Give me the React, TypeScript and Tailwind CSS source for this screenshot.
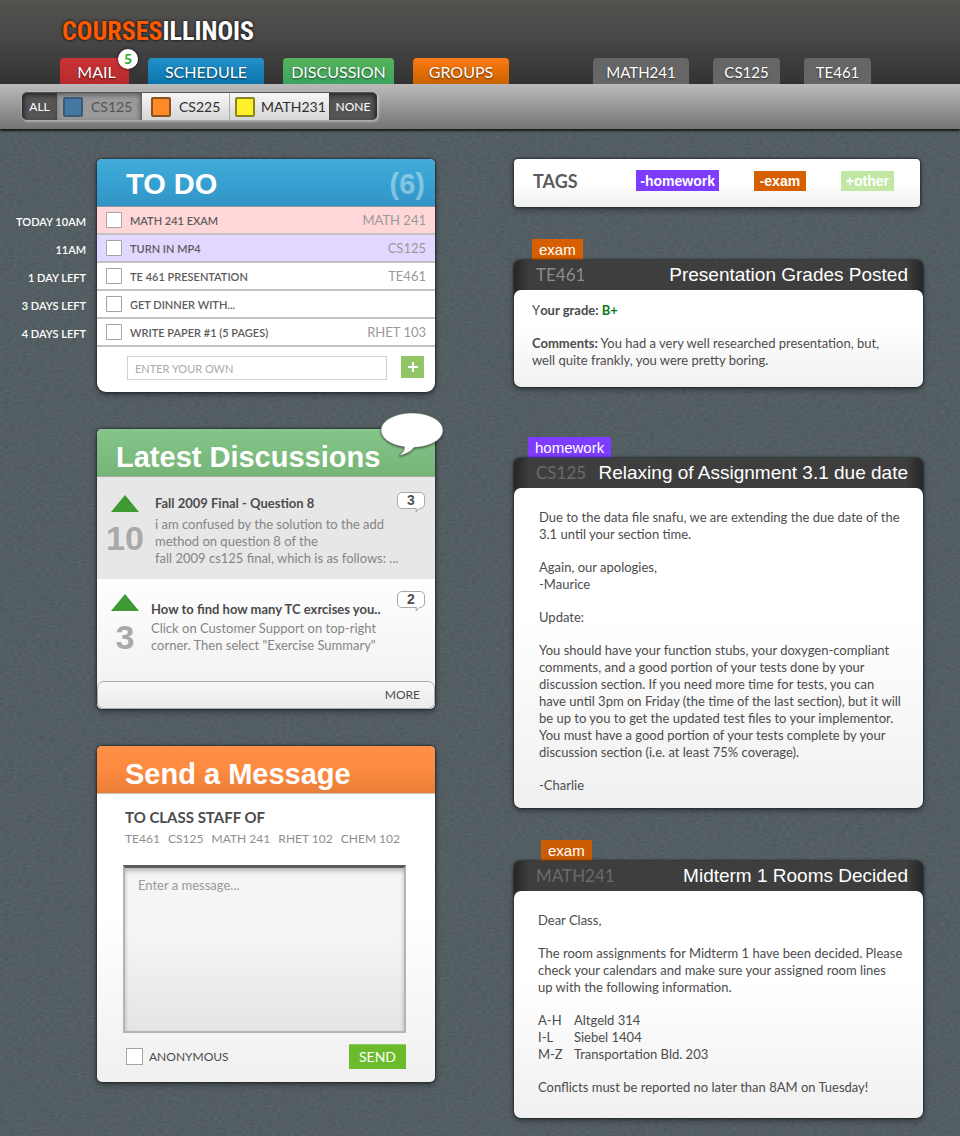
import type { ReactNode } from "react";

const sans = "font-['Lato','Carlito',sans-serif]";
const helv = "font-['Liberation_Sans',Arial,sans-serif]";

const sectionTabs = [
  { label: "MAIL", style: "w-[69px] pl-1 text-base bg-linear-to-b from-[#c93335] to-[#b82b2f]", badge: 5 },
  { label: "SCHEDULE", style: "w-[116px] text-base bg-linear-to-b from-[#2191cb] to-[#0b74ab]" },
  { label: "DISCUSSION", style: "w-[111px] text-base bg-linear-to-b from-[#57b35a] to-[#3aa45e]" },
  { label: "GROUPS", style: "w-[96px] text-base bg-linear-to-b from-[#ff7a12] to-[#c96300]" },
];

const courseTabs = [
  { label: "MATH241", style: "w-[96px] text-[15px] bg-[#666]" },
  { label: "CS125", style: "w-[67px] text-[15px] bg-[#666]" },
  { label: "TE461", style: "w-[67px] text-[15px] bg-[#666]" },
];

const todos = [
  { time: "TODAY 10AM", text: "MATH 241 EXAM", course: "MATH 241", style: "bg-[#ffd7d8]" },
  { time: "11AM", text: "TURN IN MP4", course: "CS125", style: "bg-[#e2d8ff]" },
  { time: "1 DAY LEFT", text: "TE 461 PRESENTATION", course: "TE461", style: "bg-white" },
  { time: "3 DAYS LEFT", text: "GET DINNER WITH...", course: "", style: "bg-white" },
  { time: "4 DAYS LEFT", text: "WRITE PAPER #1 (5 PAGES)", course: "RHET 103", style: "bg-white" },
];

const cardShadow = "shadow-[0_0_2px_1px_rgba(20,25,28,0.6),0_3px_6px_rgba(0,0,0,0.35)]";

function Texture() {
  return (
    <svg aria-hidden="true" className="pointer-events-none absolute inset-0 h-full w-full opacity-[0.06]">
      <filter id="grain" x="0" y="0" width="100%" height="100%" colorInterpolationFilters="sRGB">
        <feTurbulence type="fractalNoise" baseFrequency="0.22 0.5" numOctaves="2" seed="4" />
        <feColorMatrix values="0.8 0.8 0 0 -0.43  0.8 0.8 0 0 -0.41  0.8 0.8 0 0 -0.4  0 0 0 0 1" />
      </filter>
      <rect width="100%" height="100%" filter="url(#grain)" />
    </svg>
  );
}

function Tab({ label, style, badge }: { label: string; style: string; badge?: number }) {
  return (
    <a
      href="#"
      className={`relative flex h-[26px] items-center justify-center rounded-t-[4px] pt-[2px] leading-5 text-white [text-shadow:0_1px_2px_rgba(0,0,0,0.6)] ${style}`}
    >
      {label}
      {badge !== undefined && (
        <span className="absolute -top-[9px] -right-[9px] flex size-5 items-center justify-center rounded-full bg-white text-sm font-bold text-[#1fa81f] shadow-[0_0_3px_1px_rgba(0,0,0,0.35)] [text-shadow:none]">
          {badge}
        </span>
      )}
    </a>
  );
}

function CourseToggle({ label, swatch, style }: { label: string; swatch: string; style: string }) {
  return (
    <button type="button" className={`flex h-full items-center text-sm ${style}`}>
      <span className={`size-5 shrink-0 rounded-[2px] border-2 ${swatch}`} />
      {label}
    </button>
  );
}

function CardHeader({ title, style, children }: { title: string; style: string; children?: ReactNode }) {
  return (
    <header className={`relative flex h-12 items-center justify-between rounded-t-[5px] border-b pr-[10px] text-[29px] text-white ${helv} ${style}`}>
      <h2 className="font-bold">{title}</h2>
      {children}
    </header>
  );
}

function TodoCard() {
  return (
    <section className={`rounded-t-[5px] rounded-b-[9px] bg-white ${cardShadow}`}>
      <CardHeader title="TO DO" style="border-[#8a96a0] bg-linear-to-b from-[#43abd8] via-[#37a1d2] to-[#3195c4] pt-1 pl-[29px]">
        <span className="font-bold text-white/40">(6)</span>
      </CardHeader>
      <ul>
        {todos.map((t, i) => (
          <li key={t.text} className="-ml-[97px] flex h-7 items-center">
            <span className="w-[97px] shrink-0 pt-[2px] pr-[11px] text-right text-[11px] font-semibold text-white">{t.time}</span>
            <div className={`flex h-full flex-1 items-center border-b-2 border-[#c2c2c2] px-[9px] ${t.style}`}>
              <input
                id={`todo-${i}`}
                type="checkbox"
                className="size-4 shrink-0 appearance-none rounded-[1px] border border-black/35 bg-white checked:bg-[#90c665]"
              />
              <label htmlFor={`todo-${i}`} className="flex flex-1 items-center justify-between pt-[2px] pl-2 text-[11px] font-semibold text-[#5c5c5c]">
                {t.text}
                <span className="text-[13px] font-normal text-[#999]">{t.course}</span>
              </label>
            </div>
          </li>
        ))}
      </ul>
      <form className="flex justify-between pt-[9px] pr-[11px] pb-3 pl-[30px]" onSubmit={(e) => e.preventDefault()}>
        <input
          type="text"
          aria-label="Enter your own"
          placeholder="ENTER YOUR OWN"
          className="mr-[14px] h-6 min-w-0 flex-1 border border-[#d2d2d2] px-[7px] text-[11px] text-[#555] outline-none placeholder:text-[#aaa]"
        />
        <button type="button" aria-label="Add" className="flex h-[22px] w-[23px] items-center justify-center bg-[#90c665]">
          <svg viewBox="0 0 10 10" className="size-[10px] fill-white">
            <path d="M4 0h2v4h4v2H6v4H4V6H0V4h4z" />
          </svg>
        </button>
      </form>
    </section>
  );
}

function Discussion({ votes, replies, style, children }: { votes: number; replies: number; style: string; children: ReactNode }) {
  return (
    <article className={`flex h-[102px] items-start pr-[10px] ${style}`}>
      <div className="flex w-[54px] shrink-0 flex-col items-center pt-[15px] pl-[2px]">
        <button type="button" aria-label="Vote up">
          <svg viewBox="0 0 28 17" className="h-[17px] w-7">
            <path d="M14 0 28 17H0z" fill="#3f9a33" />
          </svg>
        </button>
        <span className={`pt-2 text-[34px] leading-9 font-bold text-[#a9a9a9] ${helv}`}>{votes}</span>
      </div>
      {children}
      <a
        href="#"
        aria-label={`${replies} replies`}
        className={`relative mt-3 flex h-[18px] w-7 shrink-0 justify-center text-sm leading-[17px] font-bold text-[#505050] ${helv}`}
      >
        <svg viewBox="0 0 28 21" className="absolute top-0 left-0 h-[21px] w-7" fill="#fff" stroke="#a8a8a8">
          <path d="M5 .5h18a4.500 4.500 0 0 1 4.500 4.500v7a4.500 4.500 0 0 1-4.500 4.500h-.5l-3.500 3.500.5-3.500H5A4.500 4.500 0 0 1 .5 12V5A4.500 4.500 0 0 1 5 .5z" />
        </svg>
        <span className="relative">{replies}</span>
      </a>
    </article>
  );
}

function DiscussionsCard() {
  return (
    <section className={`rounded-[5px] bg-linear-to-b from-white from-50% to-[#f0f0f0] ${cardShadow}`}>
      <CardHeader title="Latest Discussions" style="border-[#a0aba0] bg-linear-to-b from-[#86c68a] to-[#76b478] pt-[10px] pl-[19px]">
        <svg viewBox="0 0 64 48" className="absolute -top-[17px] -right-[9px] h-12 w-16 drop-shadow-[0_1px_1px_rgba(0,0,0,0.5)]">
          <path
            d="M32 1C14.900 1 1 8.600 1 18.300c0 8.200 10 15 23.500 16.700 0 3.500-2.500 6.500-5.500 8.500 6.500-.8 12-4 15-8.100C50.500 35 63 27.500 63 18.300 63 8.600 49.100 1 32 1z"
            fill="#fff"
            stroke="#5a6a60"
            strokeWidth=".6"
          />
        </svg>
      </CardHeader>
      <Discussion votes={10} replies={3} style="bg-[#e7e7e7] pt-[3px]">
        <div className="min-w-0 flex-1 pt-[15px] pl-1 text-[13px] leading-[17px] text-[#858585]">
          <h3 className="pb-1 font-bold text-[#4c4c4c]">Fall 2009 Final - Question 8</h3>
          <p className="whitespace-nowrap">
            i am confused by the solution to the add
            <br />
            method on question 8 of the
            <br />
            fall 2009 cs125 final, which is as follows: ...
          </p>
        </div>
      </Discussion>
      <Discussion votes={3} replies={2} style="">
        <div className="min-w-0 flex-1 pt-[22px] text-[13px] leading-[17px] text-[#858585]">
          <h3 className="pb-[2px] font-bold whitespace-nowrap text-[#4c4c4c]">How to find how many TC exrcises you..</h3>
          <p className="whitespace-nowrap">
            Click on Customer Support on top-right
            <br />
            corner. Then select "Exercise Summary"
          </p>
        </div>
      </Discussion>
      <a
        href="#"
        className="flex h-7 items-center justify-end rounded-[7px] border border-[#aaa] bg-linear-to-b from-[#f8f8f8] to-[#ebebeb] pr-[14px] text-xs text-[#4c4c4c]"
      >
        MORE
      </a>
    </section>
  );
}

function MessageCard() {
  return (
    <section className={`rounded-[5px] bg-linear-to-b from-white from-50% to-[#f0f0f0] ${cardShadow}`}>
      <CardHeader title="Send a Message" style="border-[#c5c0bb] bg-linear-to-b from-[#ff9148] via-[#fd8a3f] to-[#e97e38] pt-[11px] pl-[28px]" />
      <form className="pt-[13px] pr-[29px] pb-[13px] pl-[26px]" onSubmit={(e) => e.preventDefault()}>
        <h3 className="pl-[2px] text-[15px] leading-5 font-bold text-[#4c4c4c]">TO CLASS STAFF OF</h3>
        <div className="flex justify-between pt-[3px] pr-[6px] pl-[2px] text-xs leading-[17px] whitespace-nowrap text-[#8e8e8e]">
          <a href="#">TE461</a>
          <a href="#">CS125</a>
          <a href="#">MATH 241</a>
          <a href="#">RHET 102</a>
          <a href="#">CHEM 102</a>
        </div>
        <textarea
          aria-label="Message"
          placeholder="Enter a message..."
          className="mt-[18px] block h-[168px] w-full resize-none border-2 border-t-[3px] border-[#b4b4b4] border-t-[#5c5c5c] bg-linear-to-b from-[#f5f5f5] from-40% to-[#e5e5e5] px-[13px] pt-2 text-[13px] text-[#555] shadow-[inset_0_3px_4px_rgba(0,0,0,0.25)] outline-none placeholder:text-[#999]"
        />
        <div className="flex items-center justify-between pt-[11px]">
          <label className="flex items-center gap-[6px] pl-[3px] text-xs text-[#4c4c4c]">
            <input type="checkbox" className="size-[17px] appearance-none border border-[#a5a5a5] bg-white checked:bg-[#6cbb2c]" />
            ANONYMOUS
          </label>
          <button type="submit" className="h-[25px] w-[57px] border-t border-[#8fd05a] bg-[#6cbb2c] text-sm text-white">
            SEND
          </button>
        </div>
      </form>
    </section>
  );
}

function Post({
  tag,
  tagStyle,
  course,
  courseStyle,
  title,
  style,
  bodyStyle,
  children,
}: {
  tag: string;
  tagStyle: string;
  course: string;
  courseStyle: string;
  title: string;
  style: string;
  bodyStyle: string;
  children: ReactNode;
}) {
  return (
    <article className={`flex flex-col items-start ${style}`}>
      <a href="#" className={`flex h-[21px] items-center px-[7px] pt-[2px] text-[15px] text-white ${helv} ${tagStyle}`}>
        {tag}
      </a>
      <div className={`w-full rounded-[7px] bg-[#2a2a2a] ${cardShadow}`}>
        <header className="flex h-[30px] items-center justify-between rounded-t-[7px] bg-[linear-gradient(to_right,#262626,#3e3e3e_4%,#3e3e3e_96%,#262626)] pr-[15px] pl-[22px]">
          <span className={`text-[17px] ${courseStyle}`}>{course}</span>
          <h2 className={`text-[19px] whitespace-nowrap text-white ${helv}`}>{title}</h2>
        </header>
        <div
          className={`flex flex-col gap-4 rounded-[7px] bg-linear-to-b from-white from-40% to-[#f0f0f0] pr-4 text-[13px] leading-[17px] text-[#4c4c4c] ${bodyStyle}`}
        >
          {children}
        </div>
      </div>
    </article>
  );
}

export default function App() {
  return (
    <div className={`relative min-h-screen bg-[#535e63] ${sans}`}>
      <Texture />
      <div className="relative">
        <header className="flex h-[84px] flex-col justify-between bg-linear-to-b from-[#55534f] via-[#474546] to-[#333] pl-[60px]">
          <h1 className="pt-[15px] pl-[2px] font-['Roboto_Condensed','DejaVu_Sans_Condensed',sans-serif] text-[26px] leading-8 font-bold text-white [text-shadow:0_0_3px_#000]">
            <span className="text-[#ff5a00]">COURSES</span>ILLINOIS
          </h1>
          <nav className="flex justify-between pr-[89px]">
            <div className="flex gap-[19px]">
              {sectionTabs.map((t) => (
                <Tab key={t.label} {...t} />
              ))}
            </div>
            <div className="flex gap-6">
              {courseTabs.map((t) => (
                <Tab key={t.label} {...t} />
              ))}
            </div>
          </nav>
        </header>

        <div className="flex h-[45px] items-start bg-linear-to-b from-[#bbb] to-[#757575] pt-2 pl-[22px] shadow-[0_2px_2px_rgba(0,0,0,0.75)]">
          <div className="flex h-7 overflow-hidden rounded-[5px] border-t border-[#555] text-[#2e2e2e] shadow-[1px_1px_2px_1px_rgba(255,255,255,0.35)]">
            <button type="button" className="w-[35px] bg-[#555] text-xs text-white shadow-[inset_2px_2px_5px_rgba(0,0,0,0.6)]">
              ALL
            </button>
            <CourseToggle
              label="CS125"
              swatch="border-[#3a5a78] bg-[#4478a4]"
              style="w-[85px] gap-2 border-r border-[#666] bg-[#9a9a9a] pl-[6px] text-[#555] shadow-[inset_-1px_2px_5px_rgba(0,0,0,0.4)]"
            />
            <CourseToggle
              label="CS225"
              swatch="border-[#8a5220] bg-[#ff8827]"
              style="w-[88px] gap-2 border-r border-[#aaa] bg-linear-to-b from-[#f7f7f7] to-[#d6d6d6] pl-[9px]"
            />
            <CourseToggle
              label="MATH231"
              swatch="border-[#8a8420] bg-[#fff127]"
              style="w-[99px] gap-[6px] bg-linear-to-b from-[#f7f7f7] to-[#d6d6d6] pl-[5px]"
            />
            <button type="button" className="w-[48px] bg-[#555] text-xs text-white shadow-[inset_-2px_2px_5px_rgba(0,0,0,0.6)]">
              NONE
            </button>
          </div>
        </div>

        <main className="grid grid-cols-[minmax(0,435fr)_minmax(0,525fr)] items-start pt-[30px] pb-[18px]">
          <div className="flex flex-col gap-[37px] pl-[97px]">
            <TodoCard />
            <DiscussionsCard />
            <MessageCard />
          </div>

          <div className="flex flex-col pr-[37px] pl-[79px]">
            <section
              className={`mr-[3px] flex h-12 items-center justify-between rounded-[4px] bg-linear-to-b from-white from-50% to-[#efefef] pr-[26px] pb-[5px] pl-[19px] ${cardShadow}`}
            >
              <h2 className="pr-6 text-lg font-bold text-[#5c5c5c]">TAGS</h2>
              <button type="button" className={`h-[21px] bg-[#7d3cff] px-1 text-sm font-bold text-white ${helv}`}>
                -homework
              </button>
              <button type="button" className={`h-5 bg-[#d66000] px-[6px] text-sm font-bold text-white ${helv}`}>
                -exam
              </button>
              <button type="button" className={`h-5 bg-[#c2e6a4] px-[5px] text-sm font-bold text-white ${helv}`}>
                +other
              </button>
            </section>

            <Post
              tag="exam"
              tagStyle="ml-[18px] bg-[#d66000]"
              course="TE461"
              courseStyle="text-[#8c8c8c]"
              title="Presentation Grades Posted"
              style="mt-8"
              bodyStyle="pt-3 pb-[18px] pl-[18px]"
            >
              <p>
                Y<strong>our grade: </strong>
                <strong className="text-[#0b7a1b]">B+</strong>
              </p>
              <p>
                <strong>Comments:</strong> You had a very well researched presentation, but,
                <br />
                well quite frankly, you were pretty boring.
              </p>
            </Post>

            <Post
              tag="homework"
              tagStyle="ml-[14px] bg-[#7d3cff]"
              course="CS125"
              courseStyle="text-[#6a6a6a]"
              title="Relaxing of Assignment 3.1 due date"
              style="mt-[50px]"
              bodyStyle="pt-[21px] pb-[14px] pl-[25px]"
            >
              <p>
                Due to the data file snafu, we are extending the due date of the
                <br />
                3.1 until your section time.
              </p>
              <p>
                Again, our apologies,
                <br />
                -Maurice
              </p>
              <p>Update:</p>
              <p className="whitespace-nowrap">
                You should have your function stubs, your doxygen-compliant
                <br />
                comments, and a good portion of your tests done by your
                <br />
                discussion section. If you need more time for tests, you can
                <br />
                have until 3pm on Friday (the time of the last section), but it will
                <br />
                be up to you to get the updated test files to your implementor.
                <br />
                You must have a good portion of your tests complete by your
                <br />
                discussion section (i.e. at least 75% coverage).
              </p>
              <p>-Charlie</p>
            </Post>

            <Post
              tag="exam"
              tagStyle="ml-[27px] bg-[#cb5c05]"
              course="MATH241"
              courseStyle="text-[#6a6a6a]"
              title="Midterm 1 Rooms Decided"
              style="mt-8"
              bodyStyle="pt-[21px] pb-[22px] pl-6"
            >
              <p>Dear Class,</p>
              <p className="whitespace-nowrap">
                The room assignments for Midterm 1 have been decided. Please
                <br />
                check your calendars and make sure your assigned room lines
                <br />
                up with the following information.
              </p>
              <table className="w-full text-left">
                <tbody>
                  <tr>
                    <th scope="row" className="w-9 p-0 font-normal">A-H</th>
                    <td className="p-0">Altgeld 314</td>
                  </tr>
                  <tr>
                    <th scope="row" className="w-9 p-0 font-normal">I-L</th>
                    <td className="p-0">Siebel 1404</td>
                  </tr>
                  <tr>
                    <th scope="row" className="w-9 p-0 font-normal">M-Z</th>
                    <td className="p-0">Transportation Bld. 203</td>
                  </tr>
                </tbody>
              </table>
              <p>Conflicts must be reported no later than 8AM on Tuesday!</p>
            </Post>
          </div>
        </main>
      </div>
    </div>
  );
}
